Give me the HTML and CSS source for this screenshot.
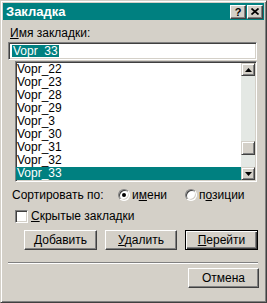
FILE: index.html
```html
<!DOCTYPE html>
<html lang="ru">
<head>
    <meta charset="UTF-8">
    <title>Закладка</title>
    <link rel="stylesheet" href="styles.css">
</head>
<body>
    <div class="dialog">
        <div class="titlebar">
            <span class="title">Закладка</span>
            <div class="title-buttons">
                <button class="tbtn help">?</button>
                <button class="tbtn close">
                    <svg width="8" height="7" viewBox="0 0 8 7">
                        <path d="M0.5 0.5 L7.5 6.5 M7.5 0.5 L0.5 6.5" stroke="#000" stroke-width="1.7" fill="none"/>
                    </svg>
                </button>
            </div>
        </div>
        <div class="content">
            <div class="name-label"><u>И</u>мя закладки:</div>
            <div class="name-input"><span class="sel">Vopr_33</span></div>
            <div class="list">
                <ul class="items">
                    <li>Vopr_22</li>
                    <li>Vopr_23</li>
                    <li>Vopr_28</li>
                    <li>Vopr_29</li>
                    <li>Vopr_3</li>
                    <li>Vopr_30</li>
                    <li>Vopr_31</li>
                    <li>Vopr_32</li>
                    <li class="selected">Vopr_33</li>
                </ul>
                <div class="scrollbar">
                    <div class="sbtn">
                        <svg width="7" height="4" viewBox="0 0 7 4"><path d="M3.5 0 L7 4 L0 4 Z" fill="#000"/></svg>
                    </div>
                    <div class="thumb"></div>
                    <div class="sbtn down">
                        <svg width="7" height="4" viewBox="0 0 7 4"><path d="M0 0 L7 0 L3.5 4 Z" fill="#000"/></svg>
                    </div>
                </div>
            </div>
            <div class="sort-row">
                <span class="sort-label">Сортировать по:</span>
                <span class="option first"><span class="radio checked"></span><span>и<u>м</u>ени</span></span>
                <span class="option"><span class="radio"></span><span>п<u>о</u>зиции</span></span>
            </div>
            <div class="check-row">
                <span class="checkbox"></span>
                <span><u>С</u>крытые закладки</span>
            </div>
            <div class="buttons">
                <button class="btn"><u>Д</u>обавить</button>
                <button class="btn narrow"><u>У</u>далить</button>
                <button class="btn default"><u>П</u>ерейти</button>
            </div>
            <div class="separator"></div>
            <div class="footer">
                <button class="btn cancel">Отмена</button>
            </div>
        </div>
    </div>
</body>
</html>
```

FILE: styles.css
```css
* {
    box-sizing: border-box;
}
body {
    margin: 0;
    background: #d4d0c8;
    font-family: "Liberation Sans", Arial, sans-serif;
    font-size: 12px;
    color: #000;
}
.dialog {
    width: 267px;
    height: 303px;
    background: #d4d0c8;
    border: 1px solid;
    border-color: #d4d0c8 #404040 #404040 #d4d0c8;
    box-shadow: inset 1px 1px #fff, inset -1px -1px #808080;
    padding: 2px;
}
.titlebar {
    height: 17px;
    display: flex;
    align-items: center;
    background: #008080;
    padding: 0 1px 0 3px;
}
.title {
    color: #fff;
    font-weight: bold;
    font-size: 13px;
    line-height: 17px;
}
.title-buttons {
    margin-left: auto;
    display: flex;
    gap: 1px;
}
.tbtn {
    width: 16px;
    height: 14px;
    padding: 0;
    background: #d4d0c8;
    border: 1px solid;
    border-color: #fff #404040 #404040 #fff;
    box-shadow: inset -1px -1px #808080;
    display: flex;
    align-items: center;
    justify-content: center;
    font-family: "Liberation Sans", Arial, sans-serif;
    font-weight: bold;
    font-size: 11px;
    line-height: 12px;
    color: #000;
}
.content {
    display: flex;
    flex-direction: column;
}
.name-label {
    margin: 6px 0 0 7px;
    line-height: 14px;
}
.name-input {
    margin: 2px 0 0 5px;
    width: 249px;
    height: 18px;
    background: #fff;
    border: 1px solid;
    border-color: #808080 #fff #fff #808080;
    box-shadow: inset 1px 1px #404040, inset -1px -1px #d4d0c8;
    padding-left: 3px;
    display: flex;
    align-items: center;
}
.sel {
    background: #008080;
    color: #fff;
    line-height: 12px;
    padding: 0 1px;
}
.list {
    margin: 1px 0 0 12px;
    width: 242px;
    height: 121px;
    display: flex;
    background: #fff;
    border: 1px solid;
    border-color: #808080 #fff #fff #808080;
    box-shadow: inset 1px 1px #404040, inset -1px -1px #d4d0c8;
    padding: 1px 1px 1px 0;
}
.items {
    flex: 1;
    list-style: none;
    margin: 0;
    padding: 0;
}
.items li {
    height: 13px;
    line-height: 13px;
    padding-left: 1px;
}
.items li.selected {
    background: #008080;
    color: #fff;
}
.scrollbar {
    width: 14px;
    display: flex;
    flex-direction: column;
    background: #e4e8e4;
}
.sbtn,
.thumb {
    background: #d4d0c8;
    border: 1px solid;
    border-color: #d4d0c8 #404040 #404040 #d4d0c8;
    box-shadow: inset 1px 1px #fff, inset -1px -1px #808080;
}
.sbtn {
    height: 13px;
    display: flex;
    align-items: center;
    justify-content: center;
}
.thumb {
    height: 14px;
    margin-top: 65px;
}
.sbtn.down {
    margin-top: auto;
}
.sort-row {
    margin: 6px 0 0 9px;
    height: 14px;
    display: flex;
    align-items: center;
}
.sort-label {
    width: 106px;
}
.option {
    display: flex;
    align-items: center;
    gap: 2px;
}
.option.first {
    width: 67px;
}
.radio {
    width: 12px;
    height: 12px;
    border-radius: 50%;
    background: #fff;
    border: 1px solid;
    border-color: #808080 #fff #fff #808080;
    box-shadow: inset 1px 1px #404040, inset -1px -1px #d4d0c8;
    display: flex;
    align-items: center;
    justify-content: center;
}
.radio.checked::after {
    content: "";
    width: 4px;
    height: 4px;
    border-radius: 50%;
    background: #000;
}
.check-row {
    margin: 7px 0 0 12px;
    height: 14px;
    display: flex;
    align-items: center;
    gap: 3px;
}
.checkbox {
    width: 13px;
    height: 13px;
    background: #fff;
    border: 1px solid;
    border-color: #808080 #fff #fff #808080;
    box-shadow: inset 1px 1px #404040, inset -1px -1px #d4d0c8;
}
.buttons {
    margin: 7px 0 0 21px;
    display: flex;
    gap: 8px;
}
.btn {
    width: 73px;
    height: 20px;
    padding: 0;
    background: #d4d0c8;
    border: 1px solid;
    border-color: #fff #404040 #404040 #fff;
    box-shadow: inset -1px -1px #808080;
    font-family: "Liberation Sans", Arial, sans-serif;
    font-size: 12px;
    color: #000;
}
.btn.narrow {
    width: 72px;
}
.btn.default {
    border-color: #000;
    box-shadow: inset 1px 1px #fff, inset -1px -1px #404040, inset -2px -2px #808080;
}
.separator {
    margin: 12px 0 0 5px;
    width: 250px;
    height: 2px;
    border-top: 1px solid #808080;
    border-bottom: 1px solid #fff;
}
.footer {
    margin-top: 4px;
    padding-right: 5px;
    display: flex;
    justify-content: flex-end;
}
.btn.cancel {
    width: 71px;
}
```
